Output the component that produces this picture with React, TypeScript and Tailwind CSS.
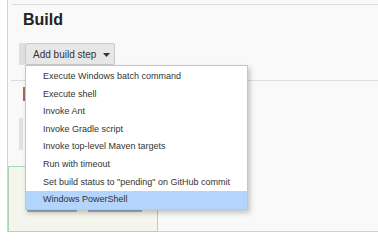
const STEPS = [
  'Execute Windows batch command',
  'Execute shell',
  'Invoke Ant',
  'Invoke Gradle script',
  'Invoke top-level Maven targets',
  'Run with timeout',
  'Set build status to "pending" on GitHub commit',
  'Windows PowerShell',
];

const ACTIVE = 'Windows PowerShell';

export default function App() {
  return (
    <div className="relative w-[378px] h-[246px] overflow-hidden bg-white font-['Liberation_Sans',Arial,sans-serif] text-[#333]">
      {/* Build section */}
      <div className="ml-[7px] w-[371px] h-[232px] flex flex-col border-l border-b border-[#d2d2d2] bg-[#f9f9f9]">
        <div className="h-[4px]" />
        <div className="ml-[4px] border-t border-[#dcdcdc]" />
        <h2 className="mt-[5px] pl-[15px] text-[16px] leading-[20px] font-bold text-[#222]">Build</h2>

        {/* Add build step button */}
        <div className="mt-[13px] pl-[11px] flex">
          <div className="w-[6px] h-[22px] bg-[#dedede]" />
          <div className="w-[90px] h-[22px] flex items-center pl-[7px] gap-[7px] border border-[#c9c9c9] rounded-[2px] bg-[#e7e7e7] text-[10px]">
            <span>Add build step</span>
            <svg width="7" height="4" viewBox="0 0 7 4" className="mt-[1px]">
              <path d="M0 0h7L3.5 4z" fill="#333" />
            </svg>
          </div>
        </div>

        <div className="mt-[15px] ml-[3px] border-t border-[#dcdcdc]" />

        {/* step container peeking behind the menu */}
        <div className="flex items-start pl-[11px]">
          <div className="mt-[37px] w-[4px] h-[32px] bg-[#e2e2e2]" />
          <div className="mt-[6px] w-[2px] h-[14px] bg-[#a06e5e]" />
        </div>

        {/* bottom bar */}
        <div className="relative mt-auto -mb-px ml-[0px] w-[150px] h-[66px] border border-[#acd6b8] bg-[#f4f5ec]">
          <div className="mt-[23px] pl-[18px] flex gap-[11px]">
            <div className="w-[50px] h-[22px] border-b-2 border-[#9fb2c9] bg-[#eef0f4]" />
            <div className="w-[54px] h-[22px] border-b-2 border-[#9fb2c9] bg-[#eef0f4]" />
          </div>
        </div>
      </div>

      {/* dropdown menu */}
      <div className="absolute left-[25px] top-[65px] w-[223px] h-[145px] py-[2px] border border-[#c6c6c6] bg-white shadow-[2px_3px_5px_rgba(0,0,0,0.22)]">
        {STEPS.map(step => (
          <div
            key={step}
            className={
              step === ACTIVE
                ? 'h-[17.6px] leading-[17.6px] pl-[17px] text-[9px] whitespace-nowrap bg-[#b3d4fc]'
                : 'h-[17.6px] leading-[17.6px] pl-[17px] text-[9px] whitespace-nowrap'
            }
          >
            {step}
          </div>
        ))}
      </div>
    </div>
  );
}
